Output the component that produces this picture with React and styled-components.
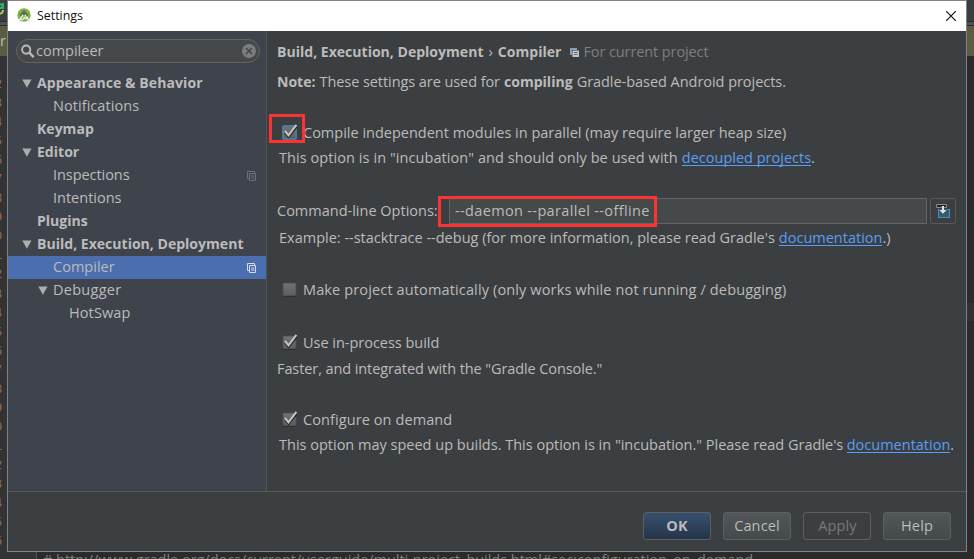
import React from "react";
import styled, { createGlobalStyle } from "styled-components";

const Global = createGlobalStyle`
  * { box-sizing: border-box; }
  body { margin: 0; overflow: hidden; background: #2b2b2b; }
`;

const Desktop = styled.div`
  display: grid;
  grid-template-columns: 7px 960px 7px;
  grid-template-rows: 552px 7px;
  width: 974px;
  height: 559px;
  overflow: hidden;
  background: #2b2b2b;
  font-family: "Open Sans", "Noto Sans", sans-serif;
  font-size: 14.5px;
  line-height: 24px;
  color: #bbbbbb;
  white-space: pre;
`;

const EditorEdge = styled.div`
  display: flex;
  flex-direction: column;
  overflow: hidden;
  background: ${(p) => (p.$gutter ? "#313335" : "#2b2b2b")};
`;
const EdgeToolbar = styled.div`
  height: 21px;
  flex: none;
  background: #3c3f41;
`;
const EdgeRule = styled.div`
  height: 5px;
  flex: none;
  background: #4f5355;
  border-top: 1px solid #2a2a2a;
  border-bottom: 1px solid #2a2a2a;
`;
const EdgeNotice = styled.div`
  height: 30px;
  flex: none;
  background: #5b5c40;
  line-height: 29px;
`;
const LineNumbers = styled.div`
  margin: 18px 0 0 -5.5px;
  font: 13px/19.05px "DejaVu Sans Mono", monospace;
  color: #8b6a4c;
`;
const EdgeShade = styled.div`
  margin-top: 247px;
  height: 18px;
  background: #313131;
`;

const EditorLine = styled.div`
  grid-column: 1 / -1;
  display: flex;
  height: 7px;
  overflow: hidden;
  color: #808080;
  background: #2b2b2b;
  line-height: 16px;
`;
const Gutter = styled.div`
  width: 37px;
  flex: none;
  height: 7px;
  background: #313335;
  border-right: 1px solid #555555;
  margin-right: 6px;
`;

const Dialog = styled.div`
  position: relative;
  display: flex;
  flex-direction: column;
  border: 1px solid #808284;
  background: #3c3f41;
`;
const TitleBar = styled.div`
  display: flex;
  align-items: center;
  height: 30px;
  flex: none;
  padding: 0 10px 0 8px;
  background: #fff;
  color: #111;
  font-size: 12.4px;
`;
const TitleText = styled.span`
  flex: 1;
  margin-left: 5px;
`;
const Body = styled.div`
  display: flex;
  height: 461px;
  flex: none;
  border-bottom: 1px solid #555759;
`;

const Sidebar = styled.div`
  width: 259px;
  flex: none;
  padding-top: 8px;
  background: #3f434c;
  border-right: 1px solid #515355;
`;
const Search = styled.div`
  display: flex;
  align-items: center;
  width: 244px;
  height: 24px;
  margin: 0 0 9px 8px;
  padding: 0 3px 0 4px;
  border: 1px solid #646464;
  border-radius: 12px;
  background: #45494a;
`;
const SearchText = styled.span`
  flex: 1;
  margin-left: 1px;
`;
const TreeRow = styled.div`
  display: flex;
  align-items: center;
  height: 23px;
  padding: 0 9px 0 ${(p) => 13.5 + p.$level * 16}px;
  background: ${(p) => (p.$selected ? "#4b6eaf" : "transparent")};
  font-weight: ${(p) => (p.$bold ? 700 : 400)};
  font-size: ${(p) => (p.$bold ? 14.05 : 14.5)}px;
  letter-spacing: ${(p) => p.$spacing || 0}px;
`;
const ArrowSlot = styled.span`
  display: flex;
  width: 15.5px;
  flex: none;
  margin-bottom: 1px;
`;
const TreeLabel = styled.span`
  flex: 1;
  margin-bottom: 2px;
`;

const Content = styled.div`
  flex: 1;
  padding: 9px 0 0 10px;
`;
const Line = styled.div`
  display: flex;
  align-items: center;
  height: 24px;
  margin-top: ${(p) => p.$gap || 0}px;
  padding-left: ${(p) => p.$indent || 0}px;
`;
const Text = styled.span`
  letter-spacing: ${(p) => p.$spacing || 0}px;
  margin-left: ${(p) => p.$left || 0}px;
  color: ${(p) => (p.$dim ? "#7c7e7f" : "inherit")};
`;
const Strong = styled.b`
  font-size: 14.05px;
  letter-spacing: ${(p) => p.$spacing || 0}px;
  margin-left: ${(p) => p.$left || 0}px;
`;
const Link = styled.a`
  align-self: flex-start;
  height: 20px;
  line-height: 24px;
  margin-left: ${(p) => p.$left || 0}px;
  letter-spacing: ${(p) => p.$spacing || 0}px;
  color: #589df6;
  border-bottom: 1px solid #589df6;
`;
const Check = styled.span`
  display: flex;
  flex: none;
  width: 18px;
  margin: ${(p) => p.$shift || 0}px 3px 0 4px;
`;
const Field = styled.div`
  display: flex;
  align-items: center;
  width: 478px;
  height: 26px;
  margin-left: 10px;
  padding-left: 5px;
  border: 1px solid #646464;
  background: #45494a;
`;
const LabelCell = styled.span`
  width: 162px;
  flex: none;
`;
const ExpandButton = styled.span`
  display: flex;
  width: 26px;
  height: 26px;
  margin-left: 3px;
  align-items: center;
  justify-content: center;
  border: 1px solid #56595b;
  border-radius: 2px;
`;
const Mark = styled.div`
  position: absolute;
  border: 3px solid #fb3433;
  left: ${(p) => p.$x}px;
  top: ${(p) => p.$y}px;
  width: ${(p) => p.$w}px;
  height: ${(p) => p.$h}px;
`;

const Footer = styled.div`
  display: flex;
  justify-content: flex-end;
  gap: 12px;
  padding: 20px 15px 0 0;
`;
const Button = styled.div`
  width: 68px;
  height: 28px;
  border: 1px solid #5c6062;
  border-radius: 3px;
  text-align: center;
  line-height: 26px;
  letter-spacing: 0.15px;
  background: linear-gradient(#525658, #44494b);
`;
const PrimaryButton = styled(Button)`
  background: linear-gradient(#37506f, #253449);
  font-weight: 700;
  font-size: 14.5px;
  line-height: 25px;
`;
const DisabledButton = styled(Button)`
  background: transparent;
  color: #777;
  padding-left: 1px;
`;

const Arrow = () => (
  <svg width="10" height="9" viewBox="0 0 10 9">
    <path d="M.3.5h9.2L4.9 8.7z" fill="#adadad" />
  </svg>
);

const ProjectIcon = ({ color = "#6b6f76" }) => (
  <svg width="10" height="10" viewBox="0 0 10 10" fill="none" stroke={color}>
    <path d="M2 7.5H.5v-7h7V2M2.5 2.5h6v7h-6zM4 5h3.5M4 7h3.5" />
  </svg>
);

const HeaderProjectIcon = () => (
  <svg width="9" height="9" viewBox="0 0 9 9">
    <path d="M0 0h7v2H2v5H0z" fill="#7da5b8" />
    <path d="M2.5 2.5H9V9H2.5z" fill="#c4c6c7" />
    <path d="M4 4.5h3.5M4 6.5h3.5" stroke="#66696b" />
  </svg>
);

const AppLogo = () => (
  <svg width="16" height="16" viewBox="0 0 16 16">
    <circle cx="8" cy="7" r="6.7" fill="#7fb345" />
    <path d="M8 2v2M4.8 9.3c-.7-3 .6-4.8 3.2-4.8s3.8 1.8 3.2 4.8" stroke="#54634e" strokeWidth="1.3" fill="none" />
    <circle cx="8" cy="5.2" r="2" fill="#5c6b58" />
    <path d="M5.3 8.5 2.4 14.5M7 6.7 4.8 11c2 1.4 3.3-.2 3.4-2.2.3 1.7 1.4 2.4 2.8 1.6L9 6.7M10.9 8.5l2.8 6" stroke="#e9eee7" strokeWidth="1.2" fill="none" />
  </svg>
);

const SearchIcon = () => (
  <svg width="14" height="14" viewBox="0 0 14 14" fill="none" stroke="#b9bcbe">
    <circle cx="5.2" cy="5.6" r="4.1" strokeWidth="1.9" />
    <path d="m8.3 8.7 4.4 4.4" strokeWidth="2.4" />
  </svg>
);

const ClearIcon = () => (
  <svg width="14" height="14" viewBox="0 0 14 14">
    <circle cx="7" cy="7" r="7" fill="#7b7d7e" />
    <path d="m4 4 6 6m0-6-6 6" stroke="#45494a" strokeWidth="1.7" />
  </svg>
);

const CloseIcon = () => (
  <svg width="10" height="10" viewBox="0 0 10 10">
    <path d="m0 0 10 10M10 0 0 10" stroke="#111" strokeWidth="1.2" />
  </svg>
);

const CheckIcon = ({ checked, focused }) => (
  <svg width="17" height="17" viewBox="0 0 17 17">
    <defs>
      <linearGradient id="boxFill" x1="0" y1="0" x2="0" y2="1">
        <stop offset="0" stopColor="#707273" />
        <stop offset="1" stopColor="#5b5d5e" />
      </linearGradient>
    </defs>
    {focused && <rect x="1" y="2" width="15" height="15" rx="2.5" fill="#466d94" />}
    <rect x="2" y="3" width="13" height="13" rx="1" fill="url(#boxFill)" stroke={focused ? "#5781aa" : "#4c4f50"} strokeWidth={focused ? 1.2 : 0.8} />
    {!focused && <path d="M1.5 16.4h14" stroke="#292b2c" strokeWidth=".8" />}
    {checked && (
      <>
        <path d="m4.2 9.5 3.4 4.2 8-10" stroke="#27292a" strokeWidth="2.2" fill="none" />
        <path d="m4 8 3.5 4.3 7.9-10.4" stroke="#c4c5c5" strokeWidth="2" fill="none" />
      </>
    )}
  </svg>
);

const InsertIcon = () => (
  <svg width="14" height="14" viewBox="0 0 14 14">
    <path d="M2.5 5v8.5h11v-8H11" fill="#38596d" stroke="#3d94c4" />
    <path d="M3 5h10v8H3z" fill="#38596d" />
    <path d="M2.5 5v8.5h11v-8H11" fill="none" stroke="#3d94c4" />
    <path d="M.5.5h10v3H.5z" fill="#242627" stroke="#8b8c88" />
    <path d="M6 2h2v4h2.6L7 9.8 3.4 6H6z" fill="#e0e2e3" />
  </svg>
);

const tree = [
  { label: "Appearance & Behavior", level: 0, arrow: true, bold: true, spacing: 0.05 },
  { label: "Notifications", level: 1, spacing: 0.06 },
  { label: "Keymap", level: 0, bold: true },
  { label: "Editor", level: 0, arrow: true, bold: true },
  { label: "Inspections", level: 1, project: true, spacing: -0.06 },
  { label: "Intentions", level: 1 },
  { label: "Plugins", level: 0, bold: true },
  { label: "Build, Execution, Deployment", level: 0, arrow: true, bold: true },
  { label: "Compiler", level: 1, project: true, selected: true, spacing: 0.02 },
  { label: "Debugger", level: 1, arrow: true, spacing: 0.28 },
  { label: "HotSwap", level: 2, spacing: 0.1 },
];

export default function App() {
  return (
    <>
      <Global />
      <Desktop>
        <EditorEdge $gutter>
          <EdgeToolbar>
            <svg width="7" height="21" viewBox="0 0 7 21" fill="none" strokeWidth="2">
              <path d="M-3 5C0 2 2 5 3 8M3 3v5H-1" stroke="#30b070" />
              <path d="M3 10c0 3-2 4-5 4" stroke="#a4c85a" />
            </svg>
          </EdgeToolbar>
          <EdgeRule />
          <EdgeNotice>r</EdgeNotice>
          <LineNumbers>
            {[..."2345678901234567890123456"].map((n, i) => (
              <div key={i}>{n}</div>
            ))}
          </LineNumbers>
        </EditorEdge>
        <Dialog>
          <TitleBar>
            <AppLogo />
            <TitleText>Settings</TitleText>
            <CloseIcon />
          </TitleBar>
          <Body>
            <Sidebar>
              <Search>
                <SearchIcon />
                <SearchText>compileer</SearchText>
                <ClearIcon />
              </Search>
              {tree.map((n, i) => (
                <TreeRow key={i} $level={n.level} $bold={n.bold} $selected={n.selected} $spacing={n.spacing}>
                  <ArrowSlot>{n.arrow && <Arrow />}</ArrowSlot>
                  <TreeLabel>{n.label}</TreeLabel>
                  {n.project && <ProjectIcon color={n.selected ? "#d5dae4" : undefined} />}
                </TreeRow>
              ))}
            </Sidebar>
            <Content>
              <Line>
                <Strong>Build, Execution, Deployment</Strong>
                <Text $left={5}>›</Text>
                <Strong $left={5}>Compiler</Strong>
                <Text $left={9} />
                <HeaderProjectIcon />
                <Text $left={4} $dim $spacing={-0.1}>For current project</Text>
              </Line>
              <Line $gap={6}>
                <Strong>Note:</Strong>
                <Text $left={4} $spacing={-0.07}>These settings are used for</Text>
                <Strong $left={4}>compiling</Strong>
                <Text $left={4} $spacing={-0.04}>Gradle-based Android projects.</Text>
              </Line>
              <Line $gap={27}>
                <Check $shift={-4}><CheckIcon checked focused /></Check>
                <Text $left={1}>Compile independent modules in parallel (may require larger heap size)</Text>
              </Line>
              <Line $gap={1} $indent={2}>
                <Text $spacing={0.07}>This option is in "incubation" and should only be used with</Text>
                <Link $left={4}>decoupled projects</Link>
                <Text>.</Text>
              </Line>
              <Line $gap={29}>
                <LabelCell>Command-line Options:</LabelCell>
                <Field><Text $spacing={0.35}>--daemon --parallel --offline</Text></Field>
                <ExpandButton><InsertIcon /></ExpandButton>
              </Line>
              <Line $gap={3} $indent={2}>
                <Text>Example: --stacktrace --debug (for more information, please read Gradle's</Text>
                <Link $left={4}>documentation</Link>
                <Text>.)</Text>
              </Line>
              <Line $gap={28}>
                <Check $shift={-4}><CheckIcon /></Check>
                <Text $left={1} $spacing={0.135}>Make project automatically (only works while not running / debugging)</Text>
              </Line>
              <Line $gap={29}>
                <Check $shift={-3}><CheckIcon checked /></Check>
                <Text $left={1} $spacing={-0.02}>Use in-process build</Text>
              </Line>
              <Line $gap={2}>
                <Text $spacing={-0.09}>Faster, and integrated with the "Gradle Console."</Text>
              </Line>
              <Line $gap={27}>
                <Check $shift={-3}><CheckIcon checked /></Check>
                <Text $left={1} $spacing={0.09}>Configure on demand</Text>
              </Line>
              <Line $gap={1} $indent={2}>
                <Text>This option may speed up builds. This option is in "incubation." Please read Gradle's</Text>
                <Link $left={3.5}>documentation</Link>
                <Text>.</Text>
              </Line>
            </Content>
          </Body>
          <Footer>
            <PrimaryButton>OK</PrimaryButton>
            <Button>Cancel</Button>
            <DisabledButton>Apply</DisabledButton>
            <Button>Help</Button>
          </Footer>
          <Mark $x={261} $y={113} $w={36} $h={29} />
          <Mark $x={430} $y={195} $w={219} $h={31} />
        </Dialog>
        <EditorEdge>
          <EdgeToolbar />
          <EdgeRule />
          <EdgeNotice />
          <EdgeShade />
        </EditorEdge>
        <EditorLine>
          <Gutter />
          <Text $spacing={-0.03}># http://www.gradle.org/docs/current/userguide/multi-project_builds.html#sec:configuration_on_demand</Text>
        </EditorLine>
      </Desktop>
    </>
  );
}
